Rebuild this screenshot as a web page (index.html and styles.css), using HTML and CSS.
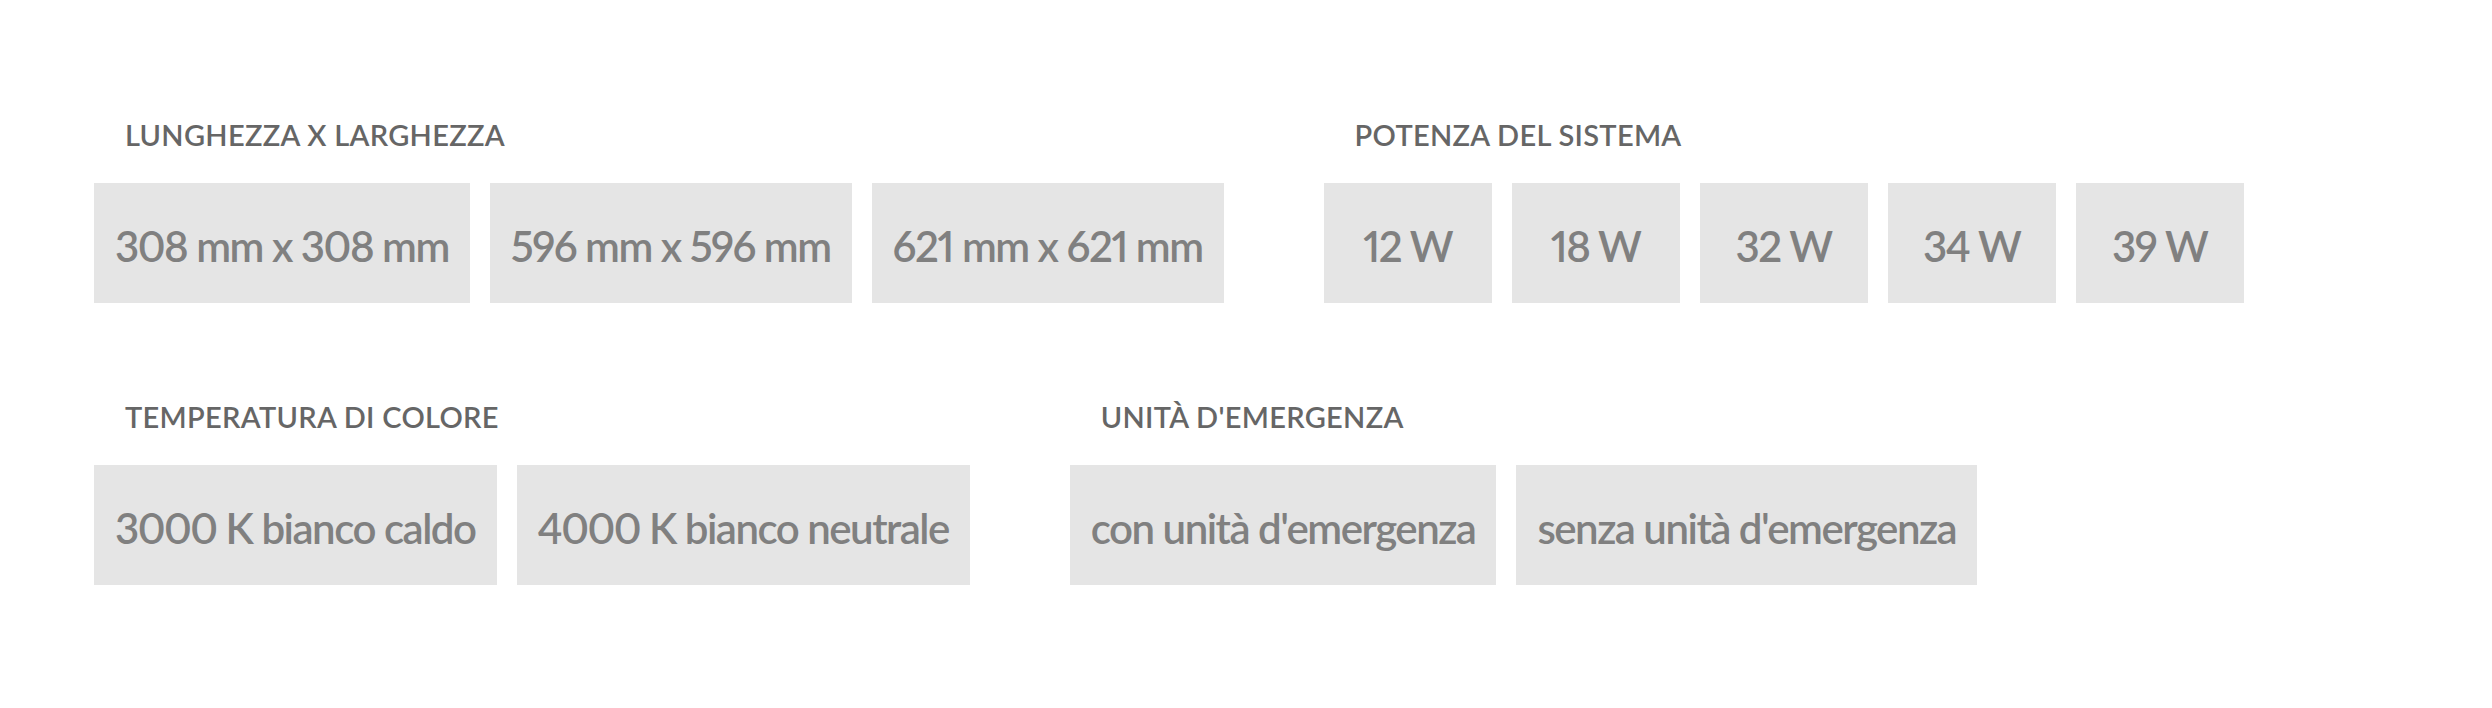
FILE: index.html
```html
<!DOCTYPE html>
<html lang="it">
<head>
  <meta charset="UTF-8">
  <meta name="viewport" content="width=device-width, initial-scale=1.0">
  <title>Varianti prodotto</title>
  <link rel="stylesheet" href="styles.css">
</head>
<body>
  <div class="specs">
    <div class="spec-row">
      <div class="spec-group">
        <h3 class="spec-title">LUNGHEZZA X LARGHEZZA</h3>
        <div class="options">
          <span class="option">308 mm x 308 mm</span>
          <span class="option">596 mm x 596 mm</span>
          <span class="option">621 mm x 621 mm</span>
        </div>
      </div>
      <div class="spec-group">
        <h3 class="spec-title">POTENZA DEL SISTEMA</h3>
        <div class="options">
          <span class="option">12 W</span>
          <span class="option">18 W</span>
          <span class="option">32 W</span>
          <span class="option">34 W</span>
          <span class="option">39 W</span>
        </div>
      </div>
    </div>

    <div class="spec-row">
      <div class="spec-group">
        <h3 class="spec-title">TEMPERATURA DI COLORE</h3>
        <div class="options">
          <span class="option">3000 K bianco caldo</span>
          <span class="option">4000 K bianco neutrale</span>
        </div>
      </div>
      <div class="spec-group">
        <h3 class="spec-title">UNITÀ D'EMERGENZA</h3>
        <div class="options">
          <span class="option">con unità d'emergenza</span>
          <span class="option">senza unità d'emergenza</span>
        </div>
      </div>
    </div>
  </div>
</body>
</html>
```

FILE: styles.css
```css
body {
  font-family: Lato, "Open Sans", sans-serif;
  margin: 0;
  padding: 0;
  background-color: #fff;
}

.specs {
  padding: 117px 0 0 94px;
}

.spec-row {
  display: flex;
  gap: 100px;
  margin-bottom: 96px;
}

.spec-title {
  margin: 0 0 30px 31px;
  font-size: 29px;
  line-height: 36px;
  font-weight: 600;
  letter-spacing: 0.3px;
  color: #666;
}

.options {
  display: flex;
  gap: 20px;
}

.option {
  box-sizing: border-box;
  min-width: 168px;
  height: 120px;
  padding: 7px 21px 0;
  line-height: 113px;
  text-align: center;
  font-size: 42px;
  font-weight: 600;
  font-variant-numeric: proportional-nums;
  letter-spacing: -1.5px;
  color: #808080;
  background-color: #e5e5e5;
}
```
